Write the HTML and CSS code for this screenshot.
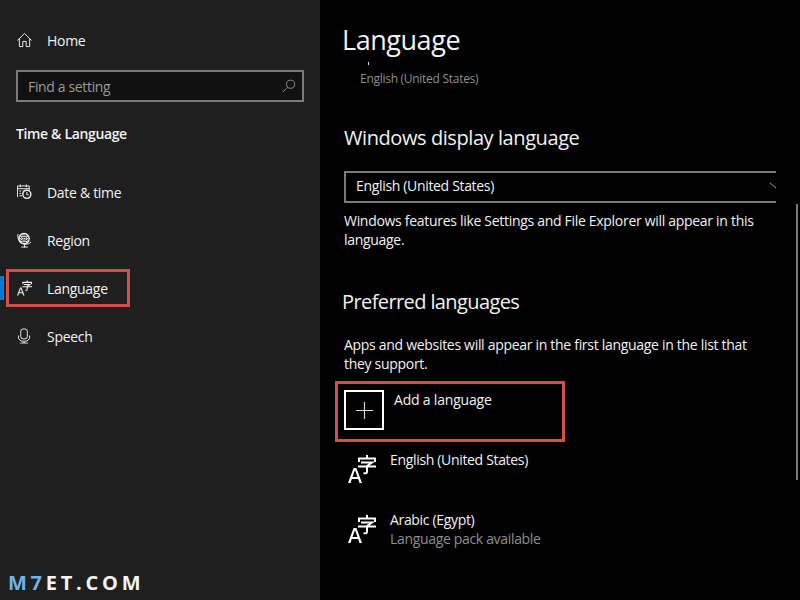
FILE: index.html
```html
<!DOCTYPE html>
<html lang="en">
<head>
<meta charset="utf-8">
<title>Settings - Language</title>
<link rel="stylesheet" href="styles.css">
</head>
<body>
<div class="app">
  <aside class="sidebar">
    <div class="nav-row home">
      <svg class="icon" viewBox="0 0 16 16"><path d="M.5 8.500 8 1l7.500 7.500M2.500 6.500v8.500h3.700V9.500h3.600V15h3.700V6.500"/></svg>
      <span>Home</span>
    </div>
    <div class="search">
      <span>Find a setting</span>
      <svg class="search-icon" viewBox="0 0 16 16"><circle cx="9.800" cy="6" r="4.600"/><path d="M6.500 9.300 1 14.800"/></svg>
    </div>
    <h2 class="section">Time &amp; Language</h2>
    <nav class="nav">
      <div class="nav-row">
        <svg class="icon" viewBox="0 0 16 16"><path d="M.5 13.500V1.500h12.500v5M.5 4.500h12.500M3.500 0v3M10 0v3M2.500 7h2M6 7h2M9.500 7h1M2.500 9.500h2M6 9.500h1M2.500 12h3"/><circle class="bold" cx="10.500" cy="10.500" r="4.300"/><path d="M10.500 8v3h2"/></svg>
        <span>Date &amp; time</span>
      </div>
      <div class="nav-row">
        <svg class="icon" viewBox="0 0 16 16"><circle class="bold" cx="7.500" cy="6.500" r="5.500"/><path class="dots" d="M3 4h9M2.500 6.500h10M3 9h9M5 1.500v10M7.500 1v11M10 1.500v10"/><path d="M1 1.500c-1 5 2 10 7.500 11 2.500.3 5-.8 6.500-2.500M8 13v3M4.500 15.500h7"/></svg>
        <span>Region</span>
      </div>
      <div class="nav-row active">
        <span class="marker"></span>
        <svg class="icon" viewBox="0 0 28 28"><path class="fill" d="M0 28 5.600 13h2.800L14 28h-2.500l-1.300-4H3.800l-1.300 4zM4.500 22h5L7 15z"/><path class="cjk" d="M19 0v3M11 7V3.500h16V7M13 7.500h11l-5 3.500v6c0 1.300-.8 1.500-3.500 1.300M10 11.500h18"/></svg>
        <span>Language</span>
      </div>
      <div class="nav-row">
        <svg class="icon" viewBox="0 0 16 16"><rect x="4" y=".5" width="7" height="10.500" rx="2.500"/><path d="M1.500 7.500v1.500a5 5 0 0 0 5 4.500h2a5 5 0 0 0 5-4.500V7.500M7.500 13.500v2M3.500 15.500h8"/></svg>
        <span>Speech</span>
      </div>
    </nav>
    <div class="brand"><span class="brand-accent">M7</span>ET.COM</div>
  </aside>
  <main class="content">
    <h1 class="title">Language</h1>
    <span class="clip-mark"></span>
    <p class="subtle top-note">English (United States)</p>
    <h2 class="heading display">Windows display language</h2>
    <div class="select">
      <span>English (United States)</span>
      <svg class="chevron" viewBox="0 0 8 8"><path d="M2 1 8 6"/></svg>
    </div>
    <p class="body-text display-note">Windows features like Settings and File Explorer will appear in this language.</p>
    <h2 class="heading preferred">Preferred languages</h2>
    <p class="body-text pref-note">Apps and websites will appear in the first language in the list that they support.</p>
    <div class="add">
      <div class="add-box"><svg viewBox="0 0 17 17"><path d="M8.500 0v17M0 8.500h17"/></svg></div>
      <span class="add-label">Add a language</span>
    </div>
    <div class="lang first">
      <svg class="lang-icon" viewBox="0 0 28 28"><path class="fill" d="M0 28 5.600 13h2.800L14 28h-2.500l-1.300-4H3.800l-1.300 4zM4.500 22h5L7 15z"/><path class="cjk" d="M19 0v3M11 7V3.500h16V7M13 7.500h11l-5 3.500v6c0 1.300-.8 1.500-3.500 1.300M10 11.500h18"/></svg>
      <div class="lang-text"><span>English (United States)</span></div>
    </div>
    <div class="lang">
      <svg class="lang-icon" viewBox="0 0 28 28"><path class="fill" d="M0 28 5.600 13h2.800L14 28h-2.500l-1.300-4H3.800l-1.300 4zM4.500 22h5L7 15z"/><path class="cjk" d="M19 0v3M11 7V3.500h16V7M13 7.500h11l-5 3.500v6c0 1.300-.8 1.500-3.500 1.300M10 11.500h18"/></svg>
      <div class="lang-text"><span>Arabic (Egypt)</span><span class="subtle">Language pack available</span></div>
    </div>
    <span class="scrollbar"></span>
  </main>
</div>
</body>
</html>
```
FILE: styles.css
```css
*, *::after { box-sizing: border-box; }
html, body { margin: 0; height: 100%; background: #000; overflow: hidden; }
body { font-family: "Open Sans", "Noto Sans", sans-serif; font-size: 14px; color: #f2f2f2; }
.app { display: flex; width: 800px; height: 600px; }

.sidebar { position: relative; display: flex; flex-direction: column; width: 320px; height: 600px; padding-top: 16px; background: #1f1f1f; }
.nav-row { position: relative; display: flex; align-items: center; gap: 15px; height: 48px; padding-left: 17px; letter-spacing: -.3px; }
.icon { width: 15px; height: 16px; flex: none; fill: none; stroke: #f2f2f2; stroke-width: 1; }
.icon .bold { stroke-width: 1.500; fill: #1f1f1f; }
.icon .dots { stroke-width: 1.200; stroke-dasharray: 1.500 1; }
.icon .fill { fill: #f2f2f2; stroke: none; }
.icon .cjk { stroke-width: 2; }
.search { display: flex; align-items: center; justify-content: space-between; width: 288px; height: 32px; margin: 6px 0 0 16px; padding: 0 6px 0 10px; border: 2px solid #7a7a7a; background: #111; color: #9a9a9a; letter-spacing: -.35px; }
.search-icon { width: 14px; height: 14px; fill: none; stroke: #9a9a9a; stroke-width: 1; }
.section { margin: 22px 0 0 16px; font-size: 14px; line-height: 20px; font-weight: 600; letter-spacing: -.35px; }
.nav { display: flex; flex-direction: column; margin-top: 24px; }
.marker { position: absolute; left: 0; top: 12px; width: 4px; height: 24px; background: #0a78d7; }
.active::after { content: ""; position: absolute; left: 6px; top: 5px; width: 124px; height: 38px; border: 3px solid #d2504c; }
.brand { position: absolute; left: 8px; bottom: 7px; font-size: 20px; line-height: 20px; font-weight: 700; letter-spacing: 3.750px; color: #f4f4f4; }
.brand-accent { color: #6fb3e6; }

.content { position: relative; flex: 1; min-width: 0; padding-left: 24px; }
.title { margin: 0 0 0 -2px; padding-top: 22px; font-size: 27px; line-height: 36px; font-weight: 400; letter-spacing: -.45px; }
.clip-mark { position: absolute; left: 48px; top: 62px; width: 1px; height: 3px; background: #ddd; }
.subtle { color: #8f8f8f; }
.top-note { margin: 12px 0 0 16px; font-size: 12px; line-height: 17px; letter-spacing: -.28px; }
.heading { margin: 0; font-size: 20px; line-height: 28px; font-weight: 400; letter-spacing: -.42px; }
.display { margin-top: 37px; }
.select { position: relative; display: flex; align-items: center; width: 432px; height: 32px; margin-top: 19px; padding: 0 0 3px 10px; border-top: 2px solid #7a7a7a; border-bottom: 2px solid #7a7a7a; border-left: 2px solid #7a7a7a; letter-spacing: -.33px; }
.chevron { position: absolute; right: 0; top: 9px; width: 8px; height: 8px; fill: none; stroke: #a0a0a0; stroke-width: 1; }
.body-text { width: 430px; margin: 0; font-size: 14px; line-height: 19px; letter-spacing: -.3px; }
.display-note { margin-top: 8px; }
.preferred { margin: 39px 0 0 -2px; letter-spacing: -.6px; }
.pref-note { margin-top: 19px; }
.add { position: relative; display: flex; align-items: flex-start; gap: 10px; height: 61px; margin-top: 8px; padding-top: 9px; }
.add::after { content: ""; position: absolute; left: -9px; top: 0; width: 230px; height: 61px; border: 3px solid #d2504c; }
.add-box { display: flex; align-items: center; justify-content: center; width: 40px; height: 40px; border: 2px solid #fff; }
.add-box svg { width: 17px; height: 17px; fill: none; stroke: #d8d8d8; stroke-width: 1.200; }
.add-label { line-height: 20px; letter-spacing: -.2px; }
.lang { display: flex; align-items: flex-start; gap: 14px; height: 60px; padding-left: 4px; }
.first { margin-top: 8px; }
.lang-icon { flex: none; width: 28px; height: 28px; margin-top: 5px; fill: none; stroke: #fff; stroke-width: 2; }
.lang-icon .fill { fill: #fff; stroke: none; }
.lang-text { display: flex; flex-direction: column; line-height: 19px; letter-spacing: -.33px; }
.scrollbar { position: absolute; left: 476px; top: 204px; width: 2px; height: 276px; background: #7a7a7a; }
```
